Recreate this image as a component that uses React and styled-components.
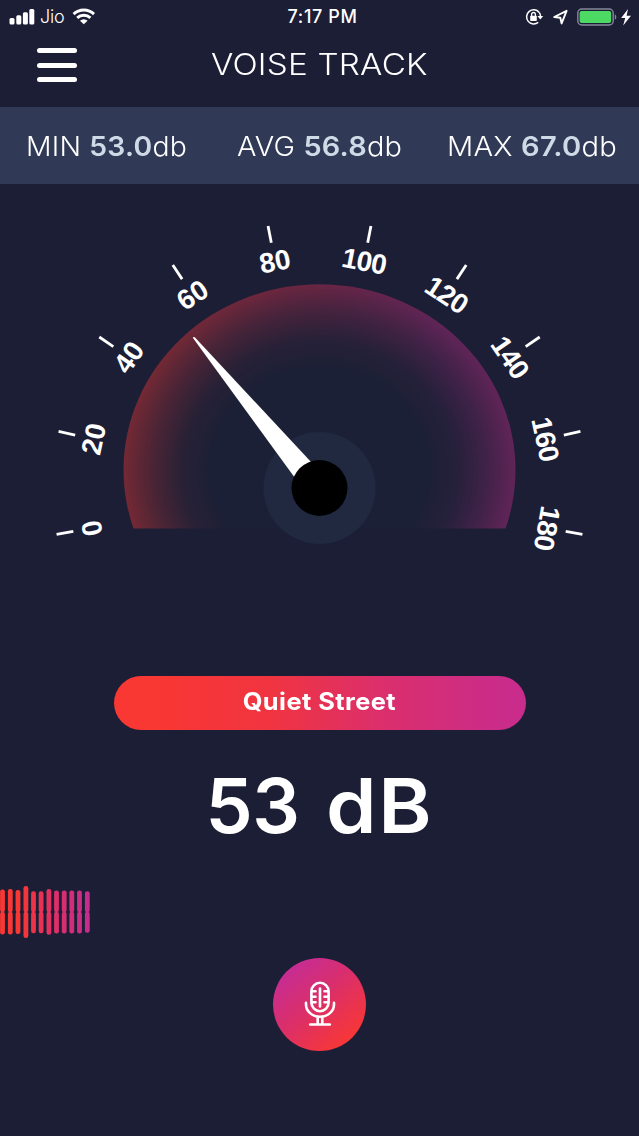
import React from "react";
import styled, { createGlobalStyle } from "styled-components";

const Global = createGlobalStyle`
  body { margin: 0; background: #1c1e36; }
  * { box-sizing: border-box; }
`;

const Screen = styled.main`
  width: 639px;
  height: 1136px;
  overflow: hidden;
  display: flex;
  flex-direction: column;
  background: #1c1e36;
  color: #fff;
  font-family: Inter, "Liberation Sans", sans-serif;
`;

const StatusBar = styled.div`
  height: 32px;
  display: grid;
  grid-template-columns: 1fr auto 1fr;
  align-items: center;
  padding: 0 6px 0 9px;
`;
const StatusGroup = styled.div`
  display: flex;
  align-items: center;
  justify-content: ${(p) => (p.$end ? "flex-end" : "flex-start")};
`;
const Carrier = styled.span`
  width: 33px;
  padding-left: 5px;
  font-size: 18px;
  font-weight: 300;
  letter-spacing: -0.2px;
  margin-right: 4px;
  line-height: 33px;
`;
const Clock = styled.span`
  font-size: 18px;
  font-weight: 500;
  line-height: 33px;
  letter-spacing: 0.6px;
  padding-left: 3px;
`;

const Header = styled.header`
  height: 75px;
  display: grid;
  grid-template-columns: 100px 1fr 100px;
  justify-items: center;
`;
const MenuButton = styled.button`
  width: 40px;
  height: 34px;
  margin: 16px 0 0 14px;
  padding: 0;
  border: 0;
  background: none;
  display: flex;
  flex-direction: column;
  justify-content: space-between;
`;
const MenuLine = styled.span`
  height: 5px;
  width: 40px;
  border-radius: 3px;
  background: #fff;
`;
const Title = styled.h1`
  margin: 0;
  font-size: 29.5px;
  font-weight: 300;
  line-height: 64px;
  letter-spacing: 0.2px;
  white-space: nowrap;
  transform: scaleX(1.125);
`;

const Stats = styled.section`
  height: 77px;
  flex: none;
  display: grid;
  grid-template-columns: 211px 210px 1fr;
  align-items: center;
  padding: 0 0 0 26px;
  background: #303a56;
`;
const Stat = styled.div`
  font-size: 27px;
  font-weight: 300;
  letter-spacing: 0.2px;
  white-space: nowrap;
  line-height: 79px;
  transform: scaleX(${(p) => p.$stretch});
  transform-origin: 0 50%;
`;
const StatValue = styled.b`
  font-weight: 600;
  color: #d0d9e6;
`;

const Gauge = styled.svg`
  display: block;
  flex: none;
  width: 639px;
  height: 492px;
`;
const DialLabel = styled.text`
  font: bold 28px "Liberation Sans", sans-serif;
  letter-spacing: ${(p) => (p.$wide ? "-0.8px" : "0")};
  fill: #fff;
  text-anchor: middle;
`;

const Reading = styled.section`
  display: flex;
  flex-direction: column;
  align-items: center;
`;
const Pill = styled.div`
  width: 412px;
  height: 54px;
  border-radius: 27px;
  background: linear-gradient(90deg, #f93733 10%, #f03440 38%, #dc2f6b 64%, #c92c8b 95%);
  text-align: center;
  font-size: 24px;
  font-weight: 700;
  line-height: 51px;
`;
const PillText = styled.span`
  display: inline-block;
  letter-spacing: 0.4px;
  transform: scaleX(1.06);
`;
const Level = styled.div`
  width: 228px;
  height: 156px;
  display: flex;
  justify-content: space-between;
  font-size: 75px;
  font-weight: 600;
  line-height: 151px;
  letter-spacing: -0.5px;
  white-space: nowrap;
`;
const Unit = styled.span`
  transform: scaleX(1.08);
  transform-origin: 100% 50%;
  letter-spacing: 1.5px;
`;

const Wave = styled.svg`
  display: block;
  flex: none;
  width: 92px;
  height: 54px;
`;

const Footer = styled.footer`
  display: flex;
  justify-content: center;
  padding-top: 18px;
`;
const MicButton = styled.button`
  width: 93px;
  height: 93px;
  padding: 0 0 2px;
  border: 0;
  border-radius: 50%;
  background: linear-gradient(140deg, #c42c96 12%, #dc2f68 48%, #f93733 88%);
  display: grid;
  place-items: center;
`;

const CX = 319.5;
const CY = 304;
const marks = [0, 20, 40, 60, 80, 100, 120, 140, 160, 180];
const bars = [
  [2.5, 889.5, 934.5], [10.3, 889, 934.5], [18, 890, 934], [25.9, 886, 938],
  [33.5, 891.2, 933.3], [41.1, 891.2, 933.3], [48.9, 889, 934.7], [56.5, 890.5, 933.5],
  [64.2, 890.4, 933.5], [71.8, 890.4, 933.5], [79.5, 890.4, 933.5], [87.3, 891.2, 932.7],
];

function SignalIcon() {
  return (
    <svg width="26" height="16" viewBox="0 0 26 16" fill="#fff">
      <rect x="0.5" y="9" width="5" height="6.5" rx="1.5" />
      <rect x="7.3" y="6.2" width="5" height="9.3" rx="1.5" />
      <rect x="13.9" y="3.2" width="5" height="12.3" rx="1.5" />
      <rect x="20.3" y="0" width="5" height="15.5" rx="1.5" />
    </svg>
  );
}

function WifiIcon() {
  return (
    <svg width="24" height="17" viewBox="0 0 24 17" fill="none" stroke="#fff" strokeWidth="2.9">
      <path d="M1.6 6.1a14.6 14.6 0 0 1 20.4 0" />
      <path d="M5.2 9.9a9.5 9.5 0 0 1 13.2 0" />
      <path d="M11.8 16.3 8 12.7a5.5 5.5 0 0 1 7.6 0Z" fill="#fff" stroke="none" />
    </svg>
  );
}

function StatusIcons() {
  return (
    <svg width="110" height="22" viewBox="0 0 110 22" fill="none">
      <path d="M16.2 6.4A7.1 7.1 0 1 0 15.2 16.4" stroke="#fff" strokeWidth="1.5" />
      <path d="M16.2 6.4c1 1.3 1.3 2.4 1.3 4" stroke="#fff" strokeWidth="1.5" />
      <path d="M14.4 10h5.8l-2.9 3.6z" fill="#fff" />
      <rect x="7.2" y="9.8" width="6.6" height="5.2" rx="0.7" fill="#fff" />
      <path d="M8.6 10V8.4a1.9 1.9 0 0 1 3.8 0V10" stroke="#fff" strokeWidth="1.3" />
      <path d="M31.2 11 43.6 4.8 38.6 17.4 37.3 11.8z" stroke="#fff" strokeWidth="1.9" strokeLinejoin="round" />
      <rect x="54.8" y="3" width="35.4" height="16" rx="4" stroke="#858899" strokeWidth="1.4" />
      <rect x="56.6" y="4.9" width="31.6" height="12.2" rx="2" fill="#4cd964" />
      <path d="M91.8 8.2c2 1 2 4.6 0 5.6z" fill="#858899" />
      <path d="M105 3 98.2 12h4l-2 7.6 7.8-9.8h-4.4z" fill="#fff" />
    </svg>
  );
}

function Dial() {
  return (
    <Gauge viewBox="0 0 639 492">
      <defs>
        <linearGradient id="sweep" x1="0" x2="1" y1="0" y2="0">
          <stop offset="0.1" stopColor="#f93733" />
          <stop offset="0.5" stopColor="#dc2f58" />
          <stop offset="0.8" stopColor="#c92c8b" />
        </linearGradient>
        <radialGradient id="fade" gradientUnits="userSpaceOnUse" cx="0" cy="0" r="1"
          gradientTransform="translate(319.5 286) scale(196 185.7)">
          <stop offset="0.55" stopColor="#fff" stopOpacity="0" />
          <stop offset="0.7" stopColor="#fff" stopOpacity="0.06" />
          <stop offset="0.85" stopColor="#fff" stopOpacity="0.21" />
          <stop offset="1" stopColor="#fff" stopOpacity="0.4" />
        </radialGradient>
        <mask id="rim">
          <rect width="639" height="492" fill="url(#fade)" />
        </mask>
        <clipPath id="cut">
          <rect width="639" height="344.5" />
        </clipPath>
      </defs>
      <g clipPath="url(#cut)">
        <ellipse cx={CX} cy="286" rx="196" ry="185.7" fill="#1c2036" />
        <ellipse cx={CX} cy="286" rx="196" ry="185.7" fill="url(#sweep)" mask="url(#rim)" />
      </g>
      {marks.map((m, i) => (
        <g key={m} transform={`rotate(${-100 + (i * 200) / 9} ${CX} ${CY})`}>
          <line x1={CX} x2={CX} y1={CY - 267} y2={CY - 250} stroke="#fff" strokeWidth="2.8" />
          <DialLabel x={CX} y={CY - 221.5} $wide={m >= 100}>{m}</DialLabel>
        </g>
      ))}
      <circle cx={CX} cy={CY} r="56" fill="#202940" />
      <path d="M192.8 153.8Q193.5 152.5 194.8 153.2L312 279 295 294Z" fill="#fff" />
      <circle cx={CX} cy={CY} r="28" fill="#000" />
    </Gauge>
  );
}

function MicIcon() {
  return (
    <svg width="32" height="46" viewBox="0 0 32 46" fill="none" stroke="#fff" strokeWidth="2.6" strokeLinecap="round">
      <rect x="7.4" y="1.8" width="17.2" height="28.4" rx="8.6" />
      <path d="M2 21.8v1.7a14 12.2 0 0 0 28 0v-1.7" />
      <path d="M16 7.5v18M8.5 10.3h3M8.5 15.7h3M8.5 21.2h3M23.5 10.3h-3M23.5 15.7h-3M23.5 21.2h-3M13.7 36v7M18.3 36v7" />
      <path d="M6.2 43.5h19.6" />
    </svg>
  );
}

export default function App() {
  return (
    <Screen>
      <Global />
      <StatusBar>
        <StatusGroup>
          <SignalIcon />
          <Carrier>Jio</Carrier>
          <WifiIcon />
        </StatusGroup>
        <Clock>7:17 PM</Clock>
        <StatusGroup $end>
          <StatusIcons />
        </StatusGroup>
      </StatusBar>
      <Header>
        <MenuButton aria-label="Menu">
          <MenuLine />
          <MenuLine />
          <MenuLine />
        </MenuButton>
        <Title>VOISE TRACK</Title>
      </Header>
      <Stats>
        <Stat $stretch={1.05}>MIN <StatValue>53.0</StatValue>db</Stat>
        <Stat $stretch={1.07}>AVG <StatValue>56.8</StatValue>db</Stat>
        <Stat $stretch={1.078}>MAX <StatValue>67.0</StatValue>db</Stat>
      </Stats>
      <Dial />
      <Reading>
        <Pill>
          <PillText>Quiet Street</PillText>
        </Pill>
        <Level>
          <span>53</span>
          <Unit>dB</Unit>
        </Level>
      </Reading>
      <Wave viewBox="0 886 92 54">
        <defs>
          <linearGradient id="wave" gradientUnits="userSpaceOnUse" x1="0" x2="90" y1="0" y2="0">
            <stop offset="0.2" stopColor="#f93733" />
            <stop offset="0.6" stopColor="#de2f66" />
            <stop offset="1" stopColor="#c42c8f" />
          </linearGradient>
        </defs>
        {bars.map(([x, top, bottom]) => (
          <g key={x} fill="url(#wave)">
            <rect x={x - 2.4} y={top} width="4.8" height={912.3 - top} rx="2.2" />
            <rect x={x - 2.4} y="911.7" width="4.8" height={bottom - 911.7} rx="2.2" />
          </g>
        ))}
      </Wave>
      <Footer>
        <MicButton aria-label="Record">
          <MicIcon />
        </MicButton>
      </Footer>
    </Screen>
  );
}
